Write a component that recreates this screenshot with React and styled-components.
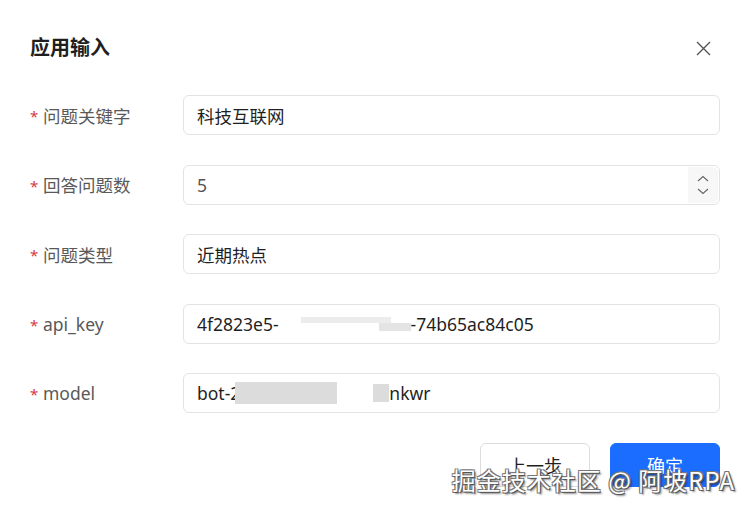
import React from 'react';
import styled, { createGlobalStyle } from 'styled-components';

const GlobalStyle = createGlobalStyle`
  html, body {
    margin: 0;
    padding: 0;
    background: #ffffff;
  }
  * {
    box-sizing: border-box;
  }
`;

const Dialog = styled.div`
  position: relative;
  width: 750px;
  height: 513px;
  padding: 34px 30px 0;
  background: #ffffff;
  border-radius: 10px;
  overflow: hidden;
  font-family: "Noto Sans", "Noto Sans CJK SC", sans-serif;
`;

const Header = styled.div`
  display: flex;
  align-items: center;
  justify-content: space-between;
  height: 28px;
  margin-bottom: 33px;
`;

const Title = styled.h2`
  margin: 0;
  font-size: 20px;
  font-weight: 700;
  line-height: 28px;
  color: #1f1f1f;
`;

const CloseButton = styled.button`
  display: flex;
  align-items: center;
  justify-content: center;
  width: 28px;
  height: 28px;
  margin-right: 3px;
  padding: 0;
  border: none;
  background: transparent;
  cursor: pointer;
`;

const Form = styled.div`
  display: flex;
  flex-direction: column;
  gap: 29.5px;
`;

const Row = styled.div`
  display: grid;
  grid-template-columns: 153px 1fr;
  align-items: center;
`;

const Label = styled.label`
  display: flex;
  align-items: center;
  font-size: 17.5px;
  color: #595959;
  font-family: "Noto Sans", "Noto Sans CJK SC", sans-serif;
`;

const Star = styled.span`
  color: #d6394a;
  font-size: 15px;
  width: 13px;
  margin-top: 2px;
`;

const Field = styled.div`
  position: relative;
  display: flex;
  align-items: center;
  height: 40px;
  padding-left: 13px;
  border: 1px solid #e3e3e3;
  border-radius: 6px;
  background: #fff;
  font-size: 17.5px;
  color: ${p => (p.$muted ? '#555' : '#1f1f1f')};
  white-space: nowrap;
  overflow: hidden;
`;

const Stepper = styled.div`
  position: absolute;
  top: 1px;
  right: 1px;
  bottom: 1px;
  width: 30px;
  display: flex;
  flex-direction: column;
  align-items: center;
  justify-content: center;
  gap: 6px;
  background: #f7f7f7;
  border-radius: 0 5px 5px 0;
`;

const Blur = styled.span`
  display: inline-block;
  width: ${p => p.$w}px;
  height: ${p => p.$h || 22}px;
  background: ${p => p.$bg || '#dcdcdc'};
  vertical-align: middle;
`;

const FaintBlur = styled.span`
  display: inline-flex;
  flex-direction: column;
  width: 132px;
  height: 14px;
  vertical-align: middle;
  &::before {
    content: "";
    height: 6px;
    margin-left: 22px;
    width: 90px;
    background: #ececec;
  }
  &::after {
    content: "";
    height: 8px;
    margin-left: 100px;
    width: 32px;
    background: #e4e4e4;
  }
`;

const Footer = styled.div`
  display: flex;
  justify-content: flex-end;
  gap: 20px;
  margin-top: 30px;
`;

const Button = styled.button`
  width: 110px;
  height: 44px;
  border-radius: 6px;
  font-size: 18px;
  font-family: "Noto Sans", "Noto Sans CJK SC", sans-serif;
  border: 1px solid ${p => (p.$primary ? '#1b6dff' : '#dcdcdc')};
  background: ${p => (p.$primary ? '#1b6dff' : '#fff')};
  color: ${p => (p.$primary ? '#fff' : '#1f1f1f')};
  cursor: pointer;
`;

const Watermark = styled.div`
  position: absolute;
  right: 15px;
  bottom: 16px;
  font-family: "Noto Sans CJK SC", "Noto Sans", sans-serif;
  font-size: 24px;
  font-weight: 400;
  color: #ffffff;
  letter-spacing: 1px;
  text-shadow:
    1px 1px 0 #555,
    -1px -1px 0 #777,
    1px -1px 0 #777,
    -1px 1px 0 #777,
    2px 2px 2px rgba(0, 0, 0, 0.5);
  pointer-events: none;
`;

const Chevron = ({ up }) => (
  <svg width="12" height="7" viewBox="0 0 12 7">
    <path
      d={up ? 'M1 6 L6 1.5 L11 6' : 'M1 1 L6 5.5 L11 1'}
      fill="none"
      stroke="#666"
      strokeWidth="1.1"
    />
  </svg>
);

export default function App() {
  return (
    <>
      <GlobalStyle />
      <Dialog>
        <Header>
          <Title>应用输入</Title>
          <CloseButton aria-label="close">
            <svg width="15" height="15" viewBox="0 0 15 15">
              <path d="M1 1 L14 14 M14 1 L1 14" stroke="#555" strokeWidth="1.4" />
            </svg>
          </CloseButton>
        </Header>

        <Form>
          <Row>
            <Label><Star>*</Star>问题关键字</Label>
            <Field>科技互联网</Field>
          </Row>
          <Row>
            <Label><Star>*</Star>回答问题数</Label>
            <Field $muted>
              5
              <Stepper>
                <Chevron up />
                <Chevron />
              </Stepper>
            </Field>
          </Row>
          <Row>
            <Label><Star>*</Star>问题类型</Label>
            <Field>近期热点</Field>
          </Row>
          <Row>
            <Label><Star>*</Star>api_key</Label>
            <Field>
              4f2823e5-<FaintBlur />-74b65ac84c05
            </Field>
          </Row>
          <Row>
            <Label><Star>*</Star>model</Label>
            <Field>
              bot-2<Blur $w={102} style={{ marginLeft: -5 }} /><Blur $w={36} $bg="#fff" /><Blur $w={16} $h={18} />nkwr
            </Field>
          </Row>
        </Form>

        <Footer>
          <Button>上一步</Button>
          <Button $primary>确定</Button>
        </Footer>

        <Watermark>掘金技术社区 @ 阿坡RPA</Watermark>
      </Dialog>
    </>
  );
}
